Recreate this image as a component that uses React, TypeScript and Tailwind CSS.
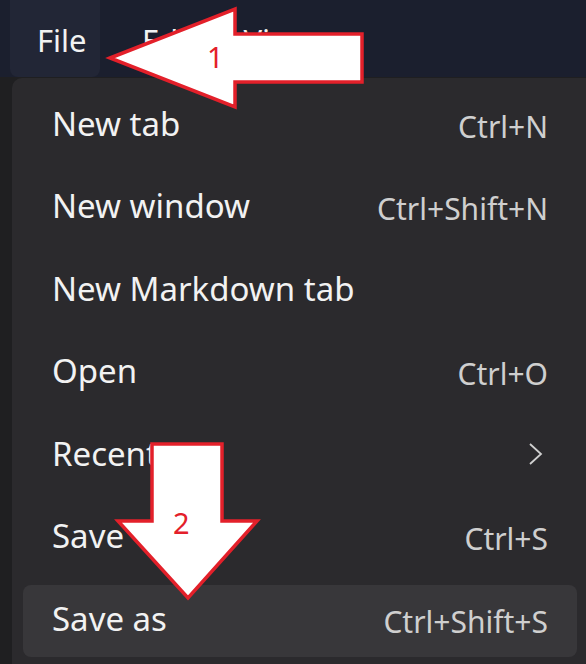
const items = [
  { label: "New tab", shortcut: "Ctrl+N" },
  { label: "New window", shortcut: "Ctrl+Shift+N" },
  { label: "New Markdown tab", shortcut: "" },
  { label: "Open", shortcut: "Ctrl+O" },
  { label: "Recent", shortcut: "", submenu: true },
  { label: "Save", shortcut: "Ctrl+S" },
  { label: "Save as", shortcut: "Ctrl+Shift+S", active: true },
];

function Callouts() {
  return (
    <svg className="absolute left-0 top-0" width="586" height="664" viewBox="0 0 586 664">
      <polygon
        points="110,58 235,9 235,34 362,34 362,82 235,82 235,107"
        fill="white"
        stroke="#e3202a"
        strokeWidth="3.5"
      />
      <polygon
        points="152,444 222,444 222,521 257,521 188,598 118,521 152,521"
        fill="white"
        stroke="#e3202a"
        strokeWidth="3.5"
      />
    </svg>
  );
}

function Chevron() {
  return (
    <svg width="16" height="24" viewBox="0 0 16 24" className="mr-[4px] -mt-[4px]">
      <polyline points="2,2 13,12 2,22" fill="none" stroke="#d0d0d0" strokeWidth="1.8" />
    </svg>
  );
}

export default function App() {
  return (
    <div
      className="relative w-[586px] h-[664px] overflow-hidden flex flex-col bg-[#1f1f21]"
      style={{ fontFamily: '"Noto Sans", "Open Sans", sans-serif' }}
    >
      <div className="h-[77px] bg-[#1b1f2e] flex items-end pl-[10px] text-[31px] text-[#f2f2f2]">
        <div className="w-[90px] h-[77px] -mt-2 rounded-b-lg bg-[#222636] flex items-center pl-[27px] pt-1">
          File
        </div>
        <div className="h-[77px] flex items-center pt-1 pl-[42px]">Edit</div>
        <div className="h-[77px] flex items-center pt-1 pl-[46px]">View</div>
      </div>
      <div className="flex-1 flex pl-[12px] pt-[1px]">
        <div className="flex-1 bg-[#2b2a2d] rounded-tl-[10px] pt-[12px] pl-[11px] pr-[9px] flex flex-col gap-[10.5px]">
          {items.map((item) => (
            <div
              key={item.label}
              className={`h-[72px] shrink-0 rounded-lg flex items-center justify-between pl-[29px] pr-[29px] ${
                item.active ? "bg-[#38373a]" : ""
              }`}
            >
              <span className="text-[33px] text-[#f2f2f2] -mt-[5px]">{item.label}</span>
              {item.submenu ? (
                <Chevron />
              ) : (
                <span className="text-[30px] text-[#cfcfcf]">{item.shortcut}</span>
              )}
            </div>
          ))}
        </div>
      </div>
      <Callouts />
      <div className="absolute left-[207px] top-[42px] text-[29px] text-[#e3202a] leading-none">1</div>
      <div className="absolute left-[173px] top-[508px] text-[29px] text-[#e3202a] leading-none">2</div>
    </div>
  );
}
